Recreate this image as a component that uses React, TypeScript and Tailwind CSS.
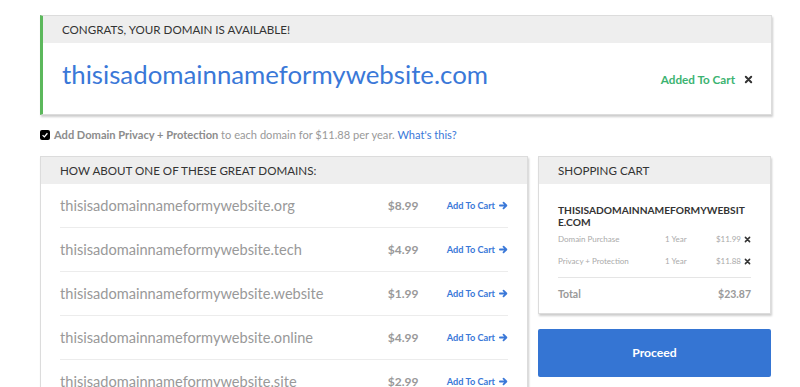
import React from 'react';

const suggestions = [
  { name: 'thisisadomainnameformywebsite.org', price: '$8.99' },
  { name: 'thisisadomainnameformywebsite.tech', price: '$4.99' },
  { name: 'thisisadomainnameformywebsite.website', price: '$1.99' },
  { name: 'thisisadomainnameformywebsite.online', price: '$4.99' },
  { name: 'thisisadomainnameformywebsite.site', price: '$2.99' },
];

const Cross = ({ className = '' }: { className?: string }) => (
  <svg viewBox="0 0 10 10" className={className} fill="none">
    <path d="M2 2 L8 8 M8 2 L2 8" stroke="currentColor" strokeWidth="2.2" strokeLinecap="round" />
  </svg>
);

const Arrow = () => (
  <svg viewBox="0 0 10 10" className="w-[9px] h-[9px]" fill="none">
    <path d="M1 5 H8 M5 1.8 L8.2 5 L5 8.2" stroke="currentColor" strokeWidth="2" strokeLinecap="round" strokeLinejoin="round" />
  </svg>
);

export default function App() {
  return (
    <div className="w-[800px] h-[387px] overflow-hidden bg-white" style={{ fontFamily: 'Lato, "Open Sans", sans-serif' }}>
      <div className="ml-[40px] w-[732px] pt-[15px]">
        {/* Available banner */}
        <div className="border border-[#dcdcdc] border-l-[3px] border-l-[#5cb85c] shadow-[1px_2px_2px_rgba(0,0,0,0.2)] bg-white">
          <div className="h-[27px] bg-[#eeeeee] flex items-center pl-[19px] text-[11.6px] text-[#333]">
            CONGRATS, YOUR DOMAIN IS AVAILABLE!
          </div>
          <div className="h-[71px] flex items-center justify-between pl-[19px] pr-[18px]">
            <span className="text-[25.8px] text-[#3a78d8] leading-none -mt-[7px]">thisisadomainnameformywebsite.com</span>
            <span className="flex items-center gap-[9px] mt-[2px]">
              <span className="text-[11.7px] font-bold text-[#3cb371]">Added To Cart</span>
              <Cross className="w-[9px] h-[9px] text-[#333]" />
            </span>
          </div>
        </div>

        {/* Privacy option */}
        <div className="flex items-center mt-[14px] h-[12px] text-[11.1px] text-[#999]">
          <span className="w-[10px] h-[10px] rounded-[2px] bg-black flex items-center justify-center mr-[4px]">
            <svg viewBox="0 0 10 10" className="w-[8px] h-[8px]" fill="none">
              <path d="M2 5.2 L4.2 7.3 L8 2.8" stroke="white" strokeWidth="1.6" />
            </svg>
          </span>
          <span className="font-bold text-[#8c8c8c]">Add Domain Privacy + Protection</span>
          <span>&nbsp;to each domain for $11.88 per year.&nbsp;</span>
          <span className="text-[#3a78d8]">What's this?</span>
        </div>

        <div className="flex gap-[10px] mt-[15px]">
          {/* Suggestions */}
          <div className="w-[488px] h-[260px] border border-[#dcdcdc] shadow-[1px_2px_2px_rgba(0,0,0,0.2)] bg-white">
            <div className="h-[27px] bg-[#eeeeee] flex items-center pl-[19px] text-[11.6px] text-[#333]">
              HOW ABOUT ONE OF THESE GREAT DOMAINS:
            </div>
            <div className="px-[19px]">
              {suggestions.map((s, i) => (
                <div
                  key={s.name}
                  className={`h-[44px] flex items-center ${i < suggestions.length - 1 ? 'border-b border-[#ececec]' : ''}`}
                >
                  <span className="flex-1 text-[14.6px] text-[#999]">{s.name}</span>
                  <span className="w-[59px] text-[12px] font-bold text-[#999]">{s.price}</span>
                  <span className="flex items-center gap-[4px] text-[9.2px] font-bold text-[#3a78d8]">
                    Add To Cart <Arrow />
                  </span>
                </div>
              ))}
            </div>
          </div>

          {/* Cart */}
          <div className="w-[233px] flex flex-col">
            <div className="border border-[#dcdcdc] shadow-[1px_2px_2px_rgba(0,0,0,0.2)] bg-white">
              <div className="h-[27px] bg-[#eeeeee] flex items-center pl-[19px] text-[11.6px] text-[#333]">
                SHOPPING CART
              </div>
              <div className="px-[19px] pt-[20px] pb-[10px]">
                <div className="text-[10.2px] font-bold text-[#333] leading-[12px] break-all">
                  THISISADOMAINNAMEFORMYWEBSITE.COM
                </div>
                <div className="flex items-center h-[22px] text-[8px] text-[#aaa]">
                  <span className="w-[107px]">Domain Purchase</span>
                  <span className="flex-1">1 Year</span>
                  <span>$11.99</span>
                  <Cross className="w-[7px] h-[7px] ml-[3px] text-[#333]" />
                </div>
                <div className="flex items-center h-[22px] text-[8px] text-[#aaa]">
                  <span className="w-[107px]">Privacy + Protection</span>
                  <span className="flex-1">1 Year</span>
                  <span>$11.88</span>
                  <Cross className="w-[7px] h-[7px] ml-[3px] text-[#333]" />
                </div>
                <div className="border-t border-[#e5e5e5] mt-[5px] pt-[9px] flex justify-between text-[10.5px] font-bold text-[#999]">
                  <span>Total</span>
                  <span>$23.87</span>
                </div>
              </div>
            </div>
            <button className="mt-[15px] h-[48px] w-full rounded-[2px] bg-[#3575d3] text-white text-[12.2px] font-bold">
              Proceed
            </button>
          </div>
        </div>
      </div>
    </div>
  );
}
